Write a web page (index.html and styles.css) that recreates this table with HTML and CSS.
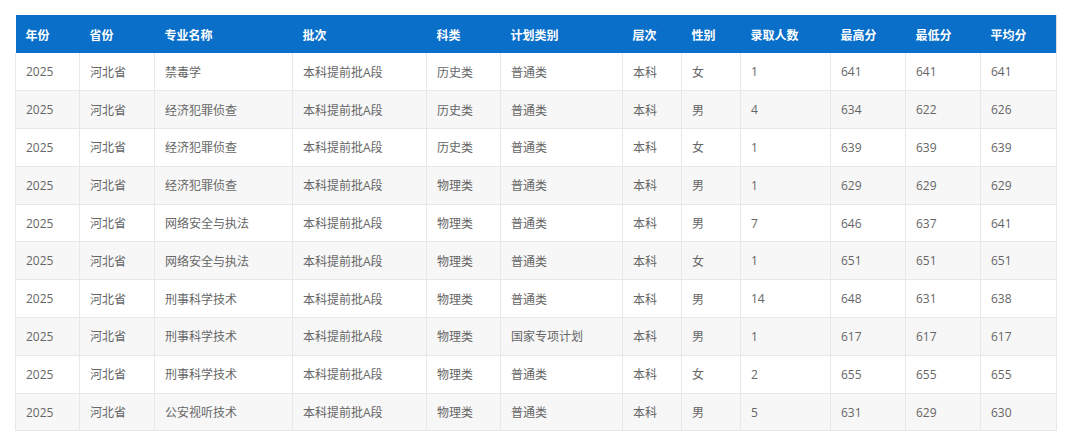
FILE: index.html
```html
<!DOCTYPE html>
<html lang="zh">
<head>
<meta charset="utf-8">
<link rel="stylesheet" href="styles.css">
</head>
<body>
<table class="score-table">
  <colgroup>
    <col class="c1"><col class="c2"><col class="c3"><col class="c4"><col class="c5"><col class="c6"><col class="c7"><col class="c8"><col class="c9"><col class="c10"><col class="c11"><col class="c12">
  </colgroup>
  <thead>
    <tr><th>年份</th><th>省份</th><th>专业名称</th><th>批次</th><th>科类</th><th>计划类别</th><th>层次</th><th>性别</th><th>录取人数</th><th>最高分</th><th>最低分</th><th>平均分</th></tr>
  </thead>
  <tbody>
    <tr><td>2025</td><td>河北省</td><td>禁毒学</td><td>本科提前批A段</td><td>历史类</td><td>普通类</td><td>本科</td><td>女</td><td>1</td><td>641</td><td>641</td><td>641</td></tr>
    <tr><td>2025</td><td>河北省</td><td>经济犯罪侦查</td><td>本科提前批A段</td><td>历史类</td><td>普通类</td><td>本科</td><td>男</td><td>4</td><td>634</td><td>622</td><td>626</td></tr>
    <tr><td>2025</td><td>河北省</td><td>经济犯罪侦查</td><td>本科提前批A段</td><td>历史类</td><td>普通类</td><td>本科</td><td>女</td><td>1</td><td>639</td><td>639</td><td>639</td></tr>
    <tr><td>2025</td><td>河北省</td><td>经济犯罪侦查</td><td>本科提前批A段</td><td>物理类</td><td>普通类</td><td>本科</td><td>男</td><td>1</td><td>629</td><td>629</td><td>629</td></tr>
    <tr><td>2025</td><td>河北省</td><td>网络安全与执法</td><td>本科提前批A段</td><td>物理类</td><td>普通类</td><td>本科</td><td>男</td><td>7</td><td>646</td><td>637</td><td>641</td></tr>
    <tr><td>2025</td><td>河北省</td><td>网络安全与执法</td><td>本科提前批A段</td><td>物理类</td><td>普通类</td><td>本科</td><td>女</td><td>1</td><td>651</td><td>651</td><td>651</td></tr>
    <tr><td>2025</td><td>河北省</td><td>刑事科学技术</td><td>本科提前批A段</td><td>物理类</td><td>普通类</td><td>本科</td><td>男</td><td>14</td><td>648</td><td>631</td><td>638</td></tr>
    <tr><td>2025</td><td>河北省</td><td>刑事科学技术</td><td>本科提前批A段</td><td>物理类</td><td>国家专项计划</td><td>本科</td><td>男</td><td>1</td><td>617</td><td>617</td><td>617</td></tr>
    <tr><td>2025</td><td>河北省</td><td>刑事科学技术</td><td>本科提前批A段</td><td>物理类</td><td>普通类</td><td>本科</td><td>女</td><td>2</td><td>655</td><td>655</td><td>655</td></tr>
    <tr><td>2025</td><td>河北省</td><td>公安视听技术</td><td>本科提前批A段</td><td>物理类</td><td>普通类</td><td>本科</td><td>男</td><td>5</td><td>631</td><td>629</td><td>630</td></tr>
  </tbody>
</table>
</body>
</html>
```
FILE: styles.css
```css
html, body {
  margin: 0;
  padding: 0;
  background: #ffffff;
}
body {
  padding: 15px 0 0 15px;
  font-family: "Open Sans", "Noto Sans CJK SC", sans-serif;
  font-size: 12px;
}
.score-table {
  border-collapse: collapse;
  table-layout: fixed;
  width: 1041px;
  border-right: 1px solid #dedede;
  border-bottom: 1px solid #dedede;
}
.c1 { width: 64px; }
.c2 { width: 75px; }
.c3 { width: 138px; }
.c4 { width: 134px; }
.c5 { width: 74px; }
.c6 { width: 122px; }
.c7 { width: 59px; }
.c8 { width: 59px; }
.c9 { width: 90px; }
.c10 { width: 75px; }
.c11 { width: 75px; }
.c12 { width: 76px; }
.score-table th {
  background: #0a6fc9;
  color: #ffffff;
  font-weight: bold;
  text-align: left;
  height: 38px;
  padding: 0 10px;
  box-sizing: border-box;
  font-family: "Noto Sans CJK SC", sans-serif;
  font-size: 12px;
}
.score-table td {
  height: 37.8px;
  padding: 0 10px;
  box-sizing: border-box;
  color: #666666;
  border: 1px solid #e8e8e8;
  border-top: none;
  white-space: nowrap;
}
.score-table tbody tr:nth-child(even) td {
  background: #f7f7f7;
}
```
